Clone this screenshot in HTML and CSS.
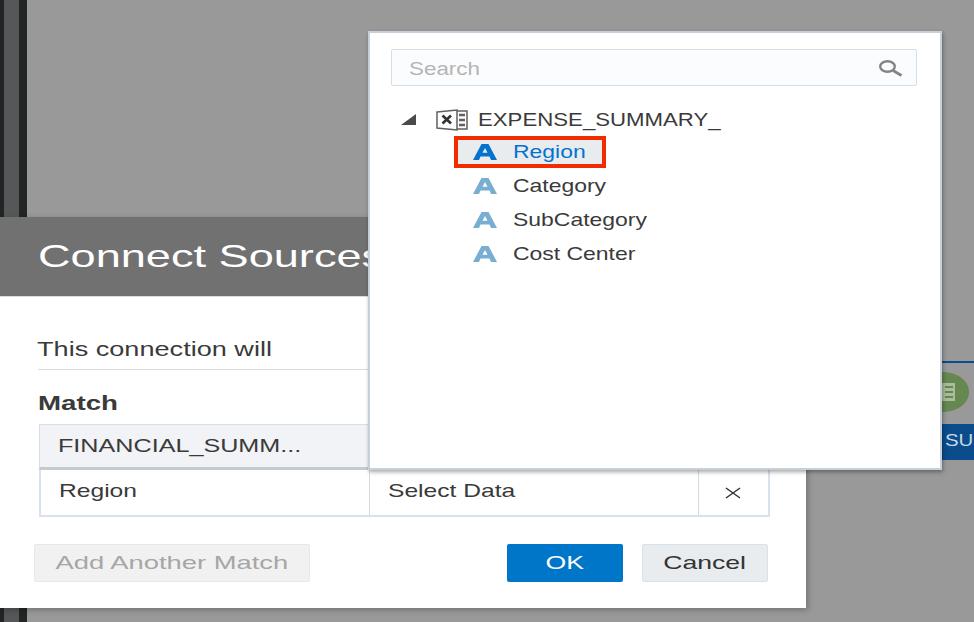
FILE: index.html
```html
<!DOCTYPE html>
<html lang="en">
<head>
    <meta charset="UTF-8">
    <title>Connect Sources</title>
    <link rel="stylesheet" href="styles.css">
</head>
<body>
    <div class="page">
        <div class="sidebar"><div class="sidebar-band"></div></div>

        <!-- data flow canvas behind the dialog -->
        <div class="flow-line"></div>
        <div class="flow-node">
            <svg width="27" height="40" viewBox="0 0 27 40">
                <path d="M0 0 C16 0 27 9 27 20 C27 31 16 40 0 40 Z" fill="#66874f"/>
                <rect x="0" y="11" width="13" height="18" fill="#a9bd9b"/>
                <path d="M3 15h8M3 20h8M3 25h8" stroke="#66874f" stroke-width="2"/>
            </svg>
        </div>
        <div class="flow-label"><span>SU</span></div>

        <div class="dialog">
            <div class="dialog-header"><span>Connect Sources</span></div>
            <div class="dialog-body">
                <p class="intro"><span>This connection will</span></p>
                <h3 class="match-title"><span>Match</span></h3>
                <div class="match-table">
                    <div class="match-head">
                        <div class="cell cell-source"><span>FINANCIAL_SUMM...</span></div>
                        <div class="cell"></div>
                    </div>
                    <div class="match-row">
                        <div class="cell cell-source"><span>Region</span></div>
                        <div class="cell cell-target"><span>Select Data</span></div>
                        <div class="cell cell-remove">
                            <svg width="16" height="12" viewBox="0 0 16 12">
                                <path d="M1 1 15 11M15 1 1 11" stroke="#333" stroke-width="1.500" fill="none"/>
                            </svg>
                        </div>
                    </div>
                </div>
                <div class="dialog-footer">
                    <button class="btn btn-disabled" type="button"><span>Add Another Match</span></button>
                    <div class="footer-right">
                        <button class="btn btn-primary" type="button"><span>OK</span></button>
                        <button class="btn btn-cancel" type="button"><span>Cancel</span></button>
                    </div>
                </div>
            </div>
        </div>

        <div class="picker">
            <div class="search">
                <span class="search-text">Search</span>
                <svg width="24" height="18" viewBox="0 0 24 18">
                    <ellipse cx="8.500" cy="7.500" rx="7.300" ry="5.300" fill="none" stroke="#7f8488" stroke-width="2.400"/>
                    <path d="M14 11.500 22.500 16.500" stroke="#7f8488" stroke-width="2.800"/>
                </svg>
            </div>
            <div class="tree-root">
                <svg class="twisty" width="16" height="12" viewBox="0 0 16 12"><path d="M15 0V11H0Z" fill="#4a4a4a"/></svg>
                <svg class="file-icon" width="32" height="22" viewBox="0 0 32 22">
                    <path d="M1 3 21 1V21L1 19Z" fill="#fff" stroke="#5f5f5f" stroke-width="1.500"/>
                    <path d="M6.500 6.500 15 14.500M15 6.500 6.500 14.500" stroke="#333" stroke-width="2.600"/>
                    <path d="M21 2H31V20H21" fill="none" stroke="#5f5f5f" stroke-width="1.500"/>
                    <path d="M23 6H29M23 11H29M23 16H29" stroke="#5f5f5f" stroke-width="2.600"/>
                </svg>
                <span class="tree-label">EXPENSE_SUMMARY_</span>
            </div>
            <ul class="columns">
                <li class="column selected">
                    <svg width="24" height="16" viewBox="0 0 24 16"><path fill-rule="evenodd" d="M0 16 8.500 0H15.500L24 16H18L16.500 12.500H7.500L6 16ZM9.500 8.800H14.500L12 4Z" fill="#0572ce"/></svg>
                    <span class="column-label">Region</span>
                </li>
                <li class="column">
                    <svg width="24" height="16" viewBox="0 0 24 16"><path fill-rule="evenodd" d="M0 16 8.500 0H15.500L24 16H18L16.500 12.500H7.500L6 16ZM9.500 8.800H14.500L12 4Z" fill="#78aed2"/></svg>
                    <span class="column-label">Category</span>
                </li>
                <li class="column">
                    <svg width="24" height="16" viewBox="0 0 24 16"><path fill-rule="evenodd" d="M0 16 8.500 0H15.500L24 16H18L16.500 12.500H7.500L6 16ZM9.500 8.800H14.500L12 4Z" fill="#78aed2"/></svg>
                    <span class="column-label">SubCategory</span>
                </li>
                <li class="column">
                    <svg width="24" height="16" viewBox="0 0 24 16"><path fill-rule="evenodd" d="M0 16 8.500 0H15.500L24 16H18L16.500 12.500H7.500L6 16ZM9.500 8.800H14.500L12 4Z" fill="#78aed2"/></svg>
                    <span class="column-label">Cost Center</span>
                </li>
            </ul>
        </div>
    </div>
</body>
</html>
```

FILE: styles.css
```css
* { box-sizing: border-box; }
body { margin: 0; font-family: "Liberation Sans", Arial, sans-serif; color: #3a3a3a; }

/* the screenshot is stretched sideways, so the text is too */
.flow-label span,
.dialog-header span,
.intro span,
.match-title span,
.cell span,
.search-text,
.tree-label,
.column-label {
    display: inline-block;
    transform-origin: 0 50%;
    white-space: nowrap;
}
.btn span { display: inline-block; white-space: nowrap; transform: scaleX(1.4); }

.page {
    position: relative;
    width: 974px;
    height: 622px;
    overflow: hidden;
    background: #999;
}

.sidebar {
    width: 27px;
    height: 622px;
    padding-left: 4px;
    background: #212524;
}
.sidebar-band { width: 15px; height: 100%; background: #565759; }

.flow-line {
    position: absolute;
    left: 942px;
    top: 361px;
    width: 32px;
    height: 2px;
    background: #0b4c8c;
}
.flow-node { position: absolute; left: 942px; top: 372px; height: 40px; }
.flow-label {
    position: absolute;
    left: 942px;
    top: 424px;
    width: 32px;
    height: 36px;
    padding-left: 3px;
    background: #0b4c8c;
    color: #c9d6e4;
    font-size: 17px;
    line-height: 34px;
    overflow: hidden;
}
.flow-label span { transform: scaleX(1.2); }

.dialog {
    position: absolute;
    left: 0;
    top: 217px;
    width: 806px;
    height: 391px;
    background: #fff;
    box-shadow: 2px 2px 6px rgba(0, 0, 0, 0.25);
}
.dialog-header {
    height: 80px;
    padding-left: 38px;
    background: #717171;
    border-bottom: 1px solid #d3dde6;
    color: #fff;
    font-size: 32px;
    line-height: 79px;
    white-space: nowrap;
    overflow: hidden;
}
.dialog-header span { transform: scaleX(1.41); }
.dialog-body { padding: 40px 38px 0 38px; }

.intro {
    margin: 0;
    height: 33px;
    border-bottom: 1px solid #d6dadd;
    font-size: 19.500px;
    line-height: 24px;
}
.intro span { margin-left: -1px; transform: scaleX(1.39); }
.match-title {
    margin: 21px 0 9px 0;
    font-size: 19.500px;
    line-height: 24px;
}
.match-title span { transform: scaleX(1.42); }

.match-table { width: 731px; margin-left: 1px; }
.match-head, .match-row { display: flex; }
.match-head {
    height: 46px;
    background: #f1f3f7;
    border: 1px solid #d6dfe8;
    border-bottom: 3px solid #c6c9cf;
}
.match-row {
    height: 47px;
    border: 2px solid #d9e2ea;
    border-top: 0;
}
.cell {
    font-size: 18.500px;
    line-height: 42px;
    white-space: nowrap;
}
.cell span { transform: scaleX(1.33); }
.match-head .cell span { transform: scaleX(1.36); }
.cell-source { width: 329px; padding-left: 18px; }
.match-row .cell-source { border-right: 1px solid #d6dadd; }
.cell-target { width: 329px; padding-left: 18px; border-right: 1px solid #d6dadd; }
.cell-remove { flex: 1; display: flex; align-items: center; justify-content: center; padding-right: 2px; }

.dialog-footer {
    display: flex;
    justify-content: space-between;
    margin: 27px 0 0 -4px;
    width: 734px;
}
.footer-right { display: flex; gap: 19px; }
.btn {
    height: 38px;
    padding: 0;
    border: 1px solid transparent;
    border-radius: 2px;
    font-family: inherit;
    font-size: 19px;
}
.btn-disabled { width: 276px; background: #f1f1f1; border-color: #e8e8e8; color: #a6a6a6; }
.btn-disabled span { transform: scaleX(1.44); }
.btn-primary { width: 116px; background: #0076c8; color: #fff; }
.btn-cancel { width: 126px; background: #e8ecef; border-color: #d9e2ea; color: #333; }

.picker {
    position: absolute;
    left: 368px;
    top: 31px;
    width: 574px;
    height: 439px;
    padding: 16px 23px 0 21px;
    background: #fff;
    border: 2px solid #c5d0da;
    box-shadow: 1px 2px 4px rgba(0, 0, 0, 0.35);
}
.search {
    display: flex;
    align-items: center;
    justify-content: space-between;
    height: 37px;
    padding: 0 13px 0 17px;
    background: #fbfcfe;
    border: 1px solid #d6dfe8;
    border-radius: 2px;
}
.search-text { padding-top: 2px; color: #b5b5b5; font-size: 18.500px; transform: scaleX(1.21); }

.tree-root {
    display: flex;
    align-items: center;
    height: 30px;
    margin-top: 19px;
    padding-left: 10px;
    font-size: 18.500px;
    white-space: nowrap;
}
.twisty { margin-right: 19px; }
.file-icon { margin-right: 10px; flex-shrink: 0; }
.tree-label { transform: scaleX(1.2); }

.columns { margin: 0; padding: 0 0 0 63px; list-style: none; }
.column {
    display: flex;
    align-items: center;
    gap: 16px;
    width: 152px;
    height: 34px;
    padding-left: 16px;
    border: 3px solid transparent;
    font-size: 18.500px;
    white-space: nowrap;
}
.column svg { flex-shrink: 0; }
.column-label { transform: scaleX(1.24); }
.column.selected {
    height: 32px;
    margin-top: 1px;
    margin-bottom: 1px;
    background: #e8ecef;
    border: 4px solid #f22b00;
    padding-left: 15px;
    color: #0572ce;
}
```
